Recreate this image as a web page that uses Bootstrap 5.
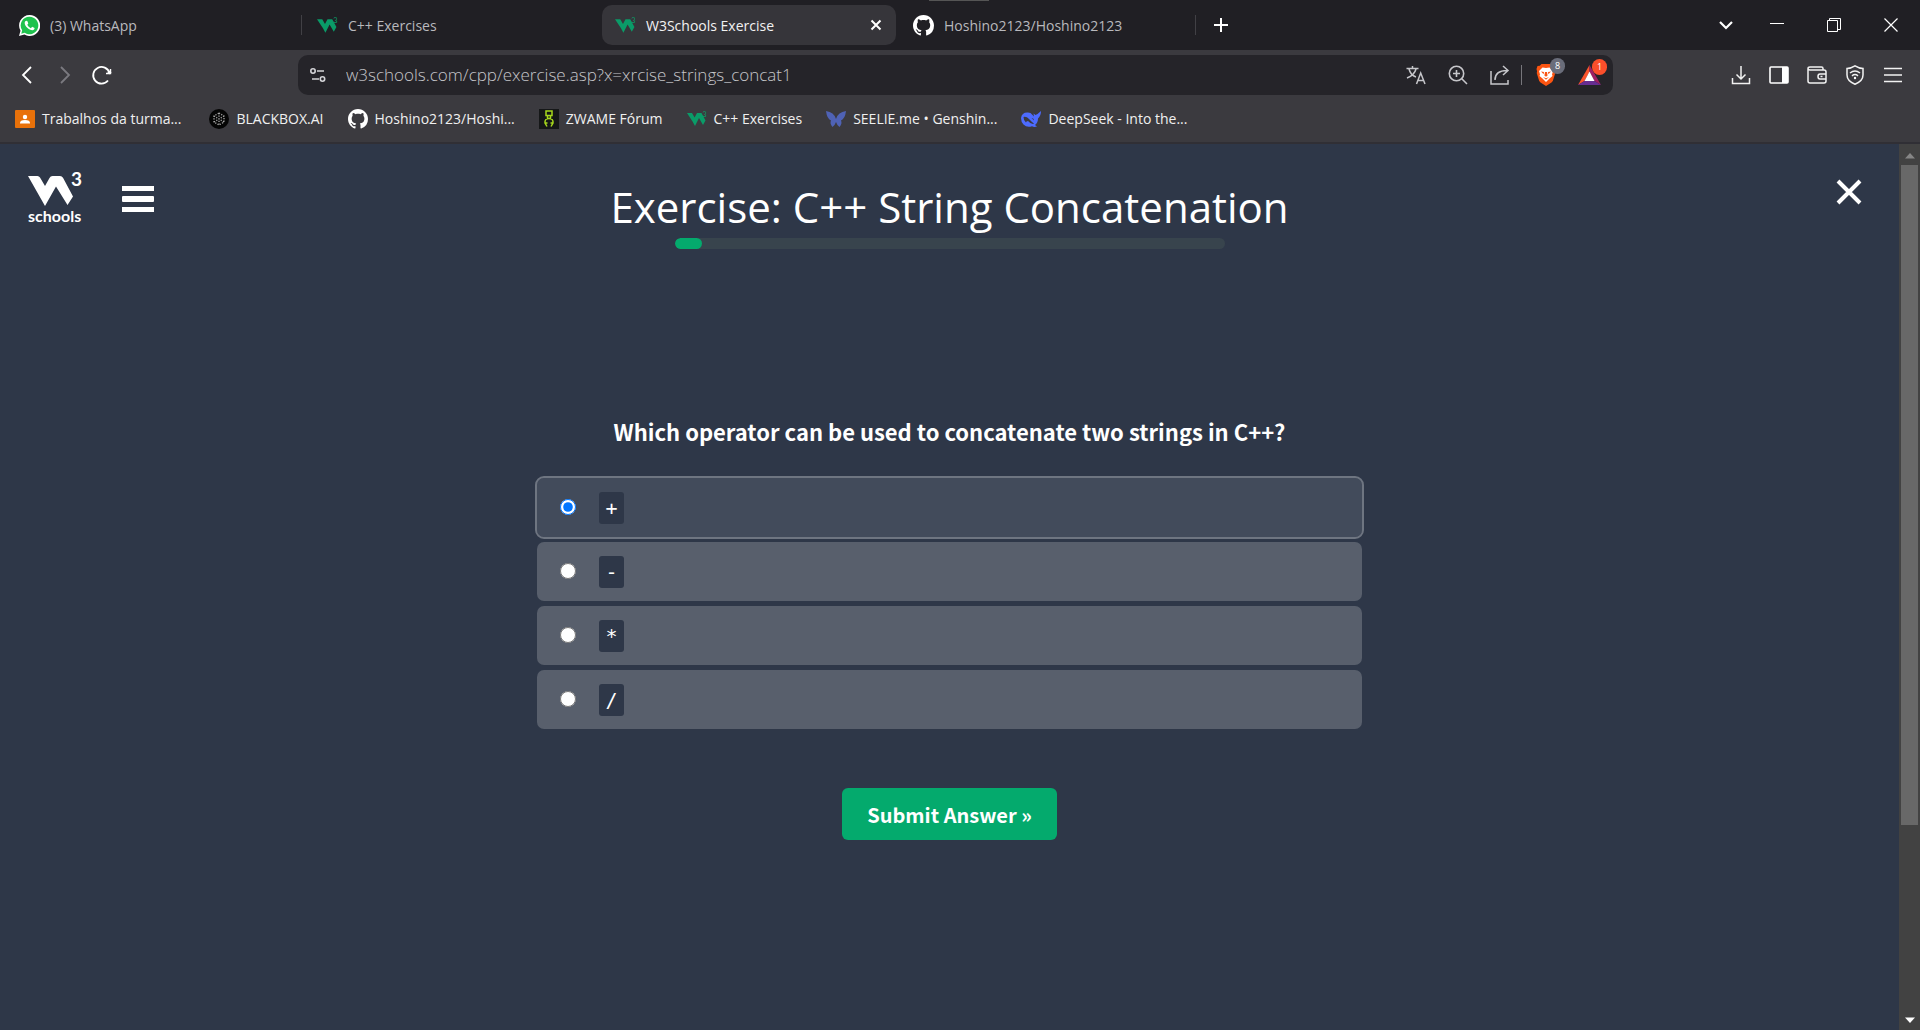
<!DOCTYPE html>
<html lang="en">
<head>
<meta charset="utf-8">
<meta name="viewport" content="width=device-width, initial-scale=1">
<title>W3Schools Exercise</title>
<link href="https://cdn.jsdelivr.net/npm/bootstrap@5.3.0/dist/css/bootstrap.min.css" rel="stylesheet">
<style>
body{font-family:"Open Sans","Noto Sans",sans-serif;font-size:14px;background:#2e3748;color:#fff;overflow:hidden}
a{color:inherit;text-decoration:none}
button{color:inherit}
svg{display:block;flex:none}
.icon-btn{background:none;border:0;padding:0;display:flex;align-items:center;justify-content:center}
.tab-strip{height:50px;background:#201f24;padding-left:6px}
.tab-item{width:298px;height:40px;gap:10px;padding:0 14px 0 13px;border-radius:10px;font-size:14px;color:#b9b9bd;position:relative}
.tab-item.split::after{content:"";position:absolute;right:2px;top:10px;height:20px;width:1px;background:#414045}
.tab-item.current{width:294px;margin-right:4px;background:#36353a;color:#f2f2f2}
.top-mark{position:absolute;left:929px;top:0;width:60px;height:1px;background:#555}
.new-tab{margin-left:16px}
.win-controls{gap:43px;padding-right:22px}
.tab-search{margin-right:-6px}
.tool-bar{background:#3b3a3f;padding:5px 0 0;border-bottom:2px solid #302f35}
.tool-row{height:40px}
.nav-group{width:298px;padding-left:17px;gap:17px}
.address-box{background:#252429;border-radius:10px;height:40px;color:#c6c6ca;padding:0 12px;flex:1 1 auto}
.address-text{background:none;border:0;outline:0;color:#c6c6ca;font-size:17px;padding:0;margin-left:20px;flex:1 1 auto;font-weight:300}
.address-icons{gap:22px}
.address-split{width:1px;height:20px;background:#77767b;margin:0 14px 0 11px}
.brave-icons{gap:22px}
.action-group{width:307px;padding-right:17px;gap:18px}
.with-count{position:relative}
.count-dot{position:absolute;left:14px;top:-6px;width:15px;height:16px;border-radius:8px;font-size:9px;line-height:16px;text-align:center;background:#6a6d7a;color:#fff}
.count-dot.hot{background:#fb4f2b}
.fav-bar{height:47px;padding-left:15px;gap:24px}
.fav-bar a{display:flex;align-items:center;gap:7px;color:#f0f0f0;font-size:14px}
.page-wrap{height:886px}
.page-body{flex:1 1 auto;position:relative;padding-top:36px}
.brand-group{position:absolute;left:28px;top:21px;gap:36px;display:flex}
.close-x{position:absolute;right:36px;top:34px}
.page-title{font-size:42px;line-height:54px;font-weight:400;margin:0}
.meter{width:550px;height:11px;border-radius:6px;background:#38444d;margin-top:4px}
.meter .progress-bar{background:#04aa6d;border-radius:6px}
.quiz{font-family:"Noto Sans CJK SC","Noto Sans CJK JP",sans-serif;width:825px;margin-top:165px}
.quiz h2{font-size:22px;line-height:34px;font-weight:600;margin:0 0 30px}
.answers{gap:5px}
.answer{height:59px;border-radius:7px;background:#585f6c;padding-left:23px;gap:23px}
.answer.picked{background:#424b5b;outline:2px solid #6e7581}
.answer input{width:16px;height:16px;margin:0 0 2px}
.answer code{background:#2e3748;color:#fff;border-radius:3px;width:25px;height:32px;line-height:32px;text-align:center;font-family:"DejaVu Sans Mono",monospace;font-size:20px}
.submit-btn{background:#04aa6d;color:#fff;border:0;border-radius:6px;width:215px;height:52px;font-size:20px;font-weight:600;margin-top:59px;padding:2px 0 0}
.side-scroll{width:21px;background:#424242;padding:9px 2px 7px}
.side-thumb{background:#686868;height:660px;margin-top:6px}
</style>
</head>
<body>
<svg width="0" height="0" style="position:absolute" aria-hidden="true">
<defs>
<symbol id="w3" viewBox="0 0 20 16"><path fill="#0a9b68" d="M0 2h5l2.600 4.500L10 2h4.500l4 7.500-2.500 4.500-4-7-4 8-2.300-4.300z"/><text x="15.500" y="6" font-size="7" font-family="Lato,sans-serif" fill="#0a9b68">3</text></symbol>
<symbol id="gh" viewBox="0 0 16 16"><path fill="#fff" d="M8 0C3.580 0 0 3.580 0 8c0 3.540 2.290 6.530 5.470 7.590.4.070.55-.17.55-.38 0-.19-.01-.82-.01-1.490-2.010.37-2.530-.49-2.690-.94-.09-.23-.48-.94-.82-1.130-.28-.15-.68-.52-.01-.53.63-.01 1.080.58 1.230.82.72 1.210 1.870.87 2.330.66.07-.52.28-.87.51-1.070-1.780-.2-3.640-.89-3.640-3.950 0-.87.31-1.590.82-2.150-.08-.2-.36-1.020.08-2.120 0 0 .67-.21 2.200.82.64-.18 1.320-.27 2-.27s1.360.09 2 .27c1.530-1.040 2.200-.82 2.200-.82.44 1.100.16 1.920.08 2.120.51.56.82 1.270.82 2.150 0 3.070-1.870 3.750-3.650 3.950.29.25.54.73.54 1.480 0 1.070-.01 1.930-.01 2.200 0 .21.15.46.55.38A8 8 0 0 0 16 8c0-4.420-3.580-8-8-8z"/></symbol>
</defs>
</svg>

<header>
<div class="tab-strip d-flex align-items-center">
<div class="top-mark"></div>
<a href="#" class="tab-item split d-flex align-items-center">
<svg width="21" height="21" viewBox="0 0 24 24"><path fill="#fff" d="M12 0a12 12 0 0 0-10.300 18L0 24l6.200-1.600A12 12 0 1 0 12 0z"/><path fill="#1fc24e" d="M12 2a10 10 0 0 0-8.400 15.500L2.600 21.300l3.900-1A10 10 0 1 0 12 2z"/><path fill="#fff" d="M8.500 6.500c-.9 0-2 1-2 2.700 0 3.800 5.200 8.400 8.800 8.300 1.600 0 2.600-1.500 2.500-2.600l-2.800-1.400-1.400 1.600c-2-.8-3.300-2.100-4.100-3.900l1.100-1.400-1.100-3z"/></svg>
<span>(3) WhatsApp</span></a>
<a href="#" class="tab-item d-flex align-items-center"><svg width="21" height="17"><use href="#w3"/></svg><span>C++ Exercises</span></a>
<div class="tab-item current d-flex align-items-center"><svg width="21" height="17"><use href="#w3"/></svg><a href="#">W3Schools Exercise</a>
<button class="icon-btn ms-auto" aria-label="Close tab"><svg width="12" height="12" viewBox="0 0 12 12" stroke="#fff" stroke-width="2"><path d="M1.500 1.500l9 9m0-9l-9 9"/></svg></button></div>
<a href="#" class="tab-item split d-flex align-items-center"><svg width="21" height="21"><use href="#gh"/></svg><span>Hoshino2123/Hoshino2123</span></a>
<button class="icon-btn new-tab" aria-label="New tab"><svg width="14" height="14" viewBox="0 0 14 14" stroke="#fff" stroke-width="2"><path d="M7 0v14M0 7h14"/></svg></button>
<div class="win-controls d-flex align-items-center ms-auto">
<button class="icon-btn tab-search" aria-label="Search tabs"><svg width="14" height="14" viewBox="0 0 14 14" fill="none" stroke="#fff" stroke-width="2.200"><path d="M1 4l6 6 6-6"/></svg></button>
<button class="icon-btn" aria-label="Minimize"><svg width="14" height="14" viewBox="0 0 14 14" stroke="#fff"><path d="M0 5.500h14"/></svg></button>
<button class="icon-btn" aria-label="Restore"><svg width="14" height="14" viewBox="0 0 14 14" fill="none" stroke="#fff"><path d="M.5 2.500h10v11H.5zM2.500 2.500v-2h11v11h-3"/></svg></button>
<button class="icon-btn" aria-label="Close"><svg width="14" height="14" viewBox="0 0 14 14" stroke="#fff" stroke-width="1.200"><path d="M.5.5l13 13m0-13l-13 13"/></svg></button>
</div>
</div>

<div class="tool-bar">
<div class="tool-row d-flex align-items-center">
<div class="nav-group d-flex align-items-center">
<button class="icon-btn" aria-label="Back"><svg width="20" height="20" viewBox="0 0 20 20" fill="none" stroke="#fff" stroke-width="1.800"><path d="M14 2L6 10l8 8"/></svg></button>
<button class="icon-btn" aria-label="Forward"><svg width="20" height="20" viewBox="0 0 20 20" fill="none" stroke="#7b7a80" stroke-width="1.800"><path d="M7 2l8 8-8 8"/></svg></button>
<button class="icon-btn" aria-label="Reload"><svg width="22" height="20" viewBox="0 0 22 20" fill="none" stroke="#fff" stroke-width="1.800"><path d="M17 15.500A8.300 8.300 0 1 1 18.500 8"/><circle cx="18.500" cy="7.500" r="1.800" fill="#fff" stroke="none"/><path d="M19.500 4v4.500H15" stroke-width="1.400"/></svg></button>
</div>
<div class="address-box d-flex align-items-center">
<svg width="16" height="16" viewBox="0 0 16 16" fill="none" stroke="#d5d5d8" stroke-width="1.600"><circle cx="3" cy="4" r="2.200"/><path d="M7 4h7M2 12h7"/><circle cx="12.500" cy="12" r="2.200"/></svg>
<input class="address-text" aria-label="Address" value="w3schools.com/cpp/exercise.asp?x=xrcise_strings_concat1">
<div class="address-icons d-flex align-items-center">
<button class="icon-btn" aria-label="Translate"><svg width="20" height="20" viewBox="0 0 20 20" fill="none" stroke="#c6c6ca" stroke-width="1.500"><path d="M.5 3.500h12M6.500 1v2.500M3 4c1 4 4 7 7 8M10 4c-1 4-4 7-9 9M10.500 19l4.200-11 4.300 11M12 15.500h5.500"/></svg></button>
<button class="icon-btn" aria-label="Zoom"><svg width="20" height="20" viewBox="0 0 20 20" fill="none" stroke="#c6c6ca" stroke-width="1.600"><circle cx="8.500" cy="8.500" r="7.200"/><path d="M8.500 5v7M5 8.500h7M13.800 13.800l5.200 5.200"/></svg></button>
<button class="icon-btn" aria-label="Share"><svg width="20" height="20" viewBox="0 0 20 20" fill="none" stroke="#c6c6ca" stroke-width="1.500"><path d="M1 6v13h17v-4M5 15c0-6 3-9.500 12-9.500M13 1l5 4.500-5 4.500"/></svg></button>
</div>
<div class="address-split"></div>
<div class="brave-icons d-flex align-items-center">
<button class="icon-btn with-count" aria-label="Brave Shields"><svg width="20" height="22" viewBox="0 0 20 22"><path fill="#fb5411" d="M5.500 0h9l1.700 1.800L18.500 2l1 3-.6 2.500.4 1.500-2.500 8-1.300 1.600L10 22l-5.500-3.400L3.200 17 .7 9l.4-1.500L.5 5l1-3 2.300-.2z"/><path fill="#fff" d="M10 4l3.500-.6L17 7l-1 3.500.5 1.500-3 2.500L10 18l-3.500-3.500-3-2.500.5-1.500L3 7l3.500-3.600z"/><path fill="#fb5411" d="M5 7.500l3 .6-.4 2.200zM15 7.500l-3 .6.4 2.200zM9 8h2l.6 3.500L10 12.800l-1.600-1.300zM7 13l3 1.300 3-1.300-3 2.700z"/></svg><span class="count-dot">8</span></button>
<button class="icon-btn with-count" aria-label="Brave Rewards"><svg width="23" height="20" viewBox="0 0 23 20"><path fill="#fb542b" d="M11.500 0v7L6.500 16 0 20z"/><path fill="#9e1f63" d="M11.500 0L23 20l-6.500-4-5-9z"/><path fill="#662d91" d="M0 20l6.500-4h10l6.500 4z"/><path fill="#fff" d="M11.500 6.500l5 9.500h-10z"/></svg><span class="count-dot hot">1</span></button>
</div>
</div>
<div class="action-group d-flex align-items-center justify-content-end">
<button class="icon-btn" aria-label="Downloads"><svg width="20" height="20" viewBox="0 0 20 20" fill="none" stroke="#f2f2f2" stroke-width="1.500"><path d="M10 1v12.500M5.500 9.500L10 14l4.500-4.500M1.500 13v5.500h17V13"/></svg></button>
<button class="icon-btn" aria-label="Sidebar"><svg width="20" height="20" viewBox="0 0 20 20"><rect x="1" y="2" width="18" height="16" rx="1" fill="none" stroke="#fff" stroke-width="1.600"/><path fill="#fff" d="M13 2h6v16h-6z"/></svg></button>
<button class="icon-btn" aria-label="Wallet"><svg width="20" height="20" viewBox="0 0 20 20" fill="none" stroke="#f2f2f2" stroke-width="1.500"><path d="M16 5V3.500Q16 2 14.500 2H3Q1 2 1 3.500T3 5h14q2 0 2 2v9q0 2-2 2H3q-2 0-2-2V3.500M19 9h-6q-2 0-2 2.500t2 2.500h6M13.500 11.500h2"/></svg></button>
<button class="icon-btn" aria-label="VPN"><svg width="20" height="20" viewBox="0 0 20 20" fill="none" stroke="#f2f2f2" stroke-width="1.500"><path d="M10 .8q4 2.500 8 2.700v6.500q0 6-8 9.200-8-3.200-8-9.200V3.500Q6 3.300 10 .8zM5 8q5-4 10 0M7 10.800q3-2.500 6 0"/><circle cx="10" cy="13" r="1.200" fill="#fff" stroke="none"/></svg></button>
<button class="icon-btn" aria-label="Menu"><svg width="20" height="20" viewBox="0 0 20 20" stroke="#f2f2f2" stroke-width="1.600"><path d="M1 3.500h18M1 10h18M1 16.500h18"/></svg></button>
</div>
</div>

<nav class="fav-bar d-flex align-items-center">
<a href="#"><svg width="20" height="18" viewBox="0 0 20 18"><rect width="20" height="18" rx="1" fill="#e8710a"/><circle cx="10" cy="7" r="2.200" fill="#fff"/><path fill="#fff" d="M5 13q0-3 5-3t5 3v.5H5z"/></svg><span class="me-1">Trabalhos da turma...</span></a>
<a href="#"><svg width="20" height="20" viewBox="0 0 20 20"><circle cx="10" cy="10" r="10" fill="#050505"/><g fill="none" stroke="#aaa" stroke-width="1.300" stroke-dasharray="1.200 1.400"><path d="M10 4l5 3v6l-5 3-5-3V7zM10 4v12M5 7l10 6M15 7L5 13"/></g></svg><span>BLACKBOX.AI</span></a>
<a href="#"><svg width="20" height="20"><use href="#gh"/></svg><span>Hoshino2123/Hoshi...</span></a>
<a href="#"><svg width="20" height="20" viewBox="0 0 20 20"><path fill="#151718" d="M0 0h20v20H0z"/><path d="M7 2h6v4.500H7zM8.500 7v3M11.500 7v3M8 17.500l-2-3.500q-.5-4.500 4-4.500t4 4.500l-2 3.500M8.500 14h-2M13.500 14h-2" fill="none" stroke="#a6d71c" stroke-width="1.500"/></svg><span>ZWAME Fórum</span></a>
<a href="#"><svg width="20" height="16"><use href="#w3"/></svg><span>C++ Exercises</span></a>
<a href="#"><svg width="20" height="18" viewBox="0 0 20 18"><path fill="#4f62b5" d="M0 1q8 1 10 8Q12 2 20 1q-1 8-5 9.500 1.500 3-1.500 6.500-2-1-3.500-5-1.500 4-3.500 5-3-3.500-1.500-6.500Q1 9 0 1z"/></svg><span>SEELIE.me • Genshin...</span></a>
<a href="#"><svg width="20" height="18" viewBox="0 0 20 18"><path fill="#4d6bfe" d="M0 8Q1 2 7 2.500q3 0 4 2l2 2-.5-3 2 1.500Q17 4 20 1q0 5-3 7.500 0 4-3 6.500l2 1.500q-3 1-5-.3Q6 18 2.500 14.500 0 12 0 8z"/><path fill="#3b3a3f" d="M2.500 7q3-.8 5.500 2t5 4.500l-1 .6q-3-.6-5-3-2 0-2 1.500Q2.500 10.500 2.500 7zM10.500 8l2 .8.500 1.700z"/></svg><span>DeepSeek - Into the...</span></a>
</nav>
</div>
</header>

<div class="page-wrap d-flex">
<main class="page-body d-flex flex-column align-items-center">
<div class="brand-group">
<a href="#" aria-label="W3Schools home"><svg width="58" height="68" viewBox="0 -6 58 68" fill="#fff"><path d="M0 5h9.500Q11 5 12 6.500l5 8.500 4.500-8Q22.500 5 24.500 5H32q2 0 3 1.700L45 25.500 39.500 34 28 15.500 17 35z"/><text x="43" y="15" font-family="Lato,sans-serif" font-weight="700" font-size="19">3</text><text x="0" y="51" font-family="Lato,sans-serif" font-weight="700" font-size="16">schools</text></svg></a>
<button class="icon-btn" aria-label="Open menu"><svg width="32" height="28" viewBox="0 0 32 28" fill="#fff"><rect y="1" width="32" height="5"/><rect y="11" width="32" height="6" rx="1"/><rect y="22" width="32" height="5"/></svg></button>
</div>
<button class="icon-btn close-x" aria-label="Close exercise"><svg width="28" height="28" viewBox="0 0 28 28" stroke="#fff" stroke-width="4"><path d="M3 3l22 22M25 3L3 25"/></svg></button>
<h1 class="page-title">Exercise: C++ String Concatenation</h1>
<div class="meter progress" role="progressbar" aria-label="Progress"><div class="progress-bar" style="width:5%"></div></div>
<form class="quiz d-flex flex-column">
<h2 class="text-center">Which operator can be used to concatenate two strings in C++?</h2>
<div class="answers d-flex flex-column">
<label class="answer picked d-flex align-items-center"><input type="radio" name="op" checked><code>+</code></label>
<label class="answer d-flex align-items-center"><input type="radio" name="op"><code>-</code></label>
<label class="answer d-flex align-items-center"><input type="radio" name="op"><code>*</code></label>
<label class="answer d-flex align-items-center"><input type="radio" name="op"><code>/</code></label>
</div>
<button type="button" class="submit-btn align-self-center">Submit Answer »</button>
</form>
</main>
<div class="side-scroll d-flex flex-column" aria-hidden="true">
<svg class="align-self-center" width="10" height="6" viewBox="0 0 10 6"><path fill="#868686" d="M5 0l5 5.500H0z"/></svg>
<div class="side-thumb"></div>
<svg class="align-self-center mt-auto" width="10" height="6" viewBox="0 0 10 6"><path fill="#fff" d="M0 .5h10L5 6z"/></svg>
</div>
</div>
<script src="https://cdn.jsdelivr.net/npm/bootstrap@5.3.0/dist/js/bootstrap.bundle.min.js"></script>
</body>
</html>
